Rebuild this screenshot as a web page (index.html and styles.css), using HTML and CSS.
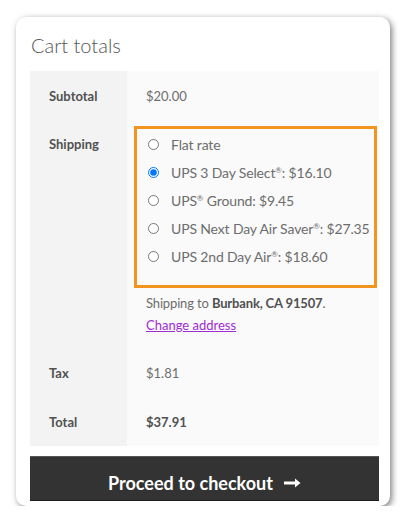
FILE: index.html
```html
<!DOCTYPE html>
<html>
<head>
<meta charset="utf-8">
<link rel="stylesheet" href="styles.css">
</head>
<body>
<div class="card">
  <h2 class="title">Cart totals</h2>
  <table class="totals">
    <tr>
      <th>Subtotal</th>
      <td>$20.00</td>
    </tr>
    <tr>
      <th>Shipping</th>
      <td class="ship">
        <ul class="methods">
          <li><input type="radio" name="m"><label>Flat rate</label></li>
          <li><input type="radio" name="m" checked><label>UPS 3 Day Select<sup>®</sup>: $16.10</label></li>
          <li><input type="radio" name="m"><label>UPS<sup>®</sup> Ground: $9.45</label></li>
          <li><input type="radio" name="m"><label>UPS Next Day Air Saver<sup>®</sup>: $27.35</label></li>
          <li><input type="radio" name="m"><label>UPS 2nd Day Air<sup>®</sup>: $18.60</label></li>
        </ul>
        <p class="dest">Shipping to <strong>Burbank, CA 91507</strong>.</p>
        <a class="change" href="#">Change address</a>
      </td>
    </tr>
    <tr>
      <th>Tax</th>
      <td>$1.81</td>
    </tr>
    <tr>
      <th>Total</th>
      <td><strong>$37.91</strong></td>
    </tr>
  </table>
  <a class="checkout" href="#">Proceed to checkout<svg class="arrow" width="17" height="10" viewBox="0 0 17 10"><path d="M0 3.6H11V0.6L16.5 5L11 9.4V6.4H0Z" fill="#fff"/></svg></a>
</div>
</body>
</html>
```
FILE: styles.css
```css
html, body {
  margin: 0;
  padding: 0;
  background: #ffffff;
}
body {
  font-family: Lato, "Liberation Sans", sans-serif;
  color: #6d6d6d;
  font-size: 14px;
}
.card {
  margin: 17px 0 0 16px;
  width: 374px;
  height: 489px;
  box-sizing: border-box;
  padding: 0 11px 0 14px;
  background: #fff;
  border-radius: 10px;
  box-shadow: 2px 2px 6px rgba(0, 0, 0, 0.5);
  overflow: hidden;
}
.title {
  margin: 0;
  padding-top: 16px;
  height: 38px;
  font-size: 20px;
  font-weight: 300;
  line-height: 24px;
  color: #555;
  padding-left: 1px;
}
.totals {
  width: 349px;
  border-collapse: collapse;
  border-spacing: 0;
}
.totals th,
.totals td {
  padding: 14px 19px;
  line-height: 21px;
  vertical-align: top;
  text-align: left;
}
.totals th {
  width: 59px;
  background: #f3f3f3;
  color: #515151;
  font-weight: 700;
  font-size: 13px;
}
.totals td {
  background: #fafafa;
  font-size: 13px;
}
.totals tr:first-child th,
.totals tr:first-child td {
  padding-top: 15px;
  padding-bottom: 13px;
}
.totals td.ship {
  padding-bottom: 12px;
}
.totals tr:nth-child(3) th,
.totals tr:nth-child(3) td,
.totals tr:nth-child(4) th,
.totals tr:nth-child(4) td {
  padding-top: 15px;
  padding-bottom: 13px;
}
.totals strong {
  font-weight: 700;
  color: #515151;
}
.methods {
  list-style: none;
  margin: -8px -17px 0 -12px;
  padding: 5px 0 18px 9px;
  border: 3px solid #f2941f;
}
.methods li {
  display: flex;
  align-items: center;
  height: 21px;
  margin-bottom: 7px;
  font-size: 14px;
  letter-spacing: -0.15px;
  white-space: nowrap;
}
.methods li:last-child {
  margin-bottom: 0;
}
.methods input {
  margin: 0 12px 0 2px;
  width: 11px;
  height: 11px;
}
.methods sup {
  font-size: 8px;
  vertical-align: 5px;
  line-height: 0;
}
.dest {
  margin: 5px 0 0;
  line-height: 21px;
  letter-spacing: -0.15px;
}
.change {
  display: block;
  color: #a12bd6;
  text-decoration: underline;
  line-height: 21px;
  margin-top: 1px;
}
.checkout {
  display: flex;
  justify-content: center;
  align-items: center;
  gap: 11px;
  margin-top: 10px;
  width: 349px;
  height: 45px;
  box-sizing: border-box;
  padding-top: 8px;
  background: #333;
  border-top: 1px solid #555;
  border-bottom: 1px solid #1c1c1c;
  color: #fff;
  text-decoration: none;
  font-weight: 700;
  font-size: 18px;
  line-height: 22px;
}
.arrow {
  display: block;
  margin-top: 1px;
}
```
